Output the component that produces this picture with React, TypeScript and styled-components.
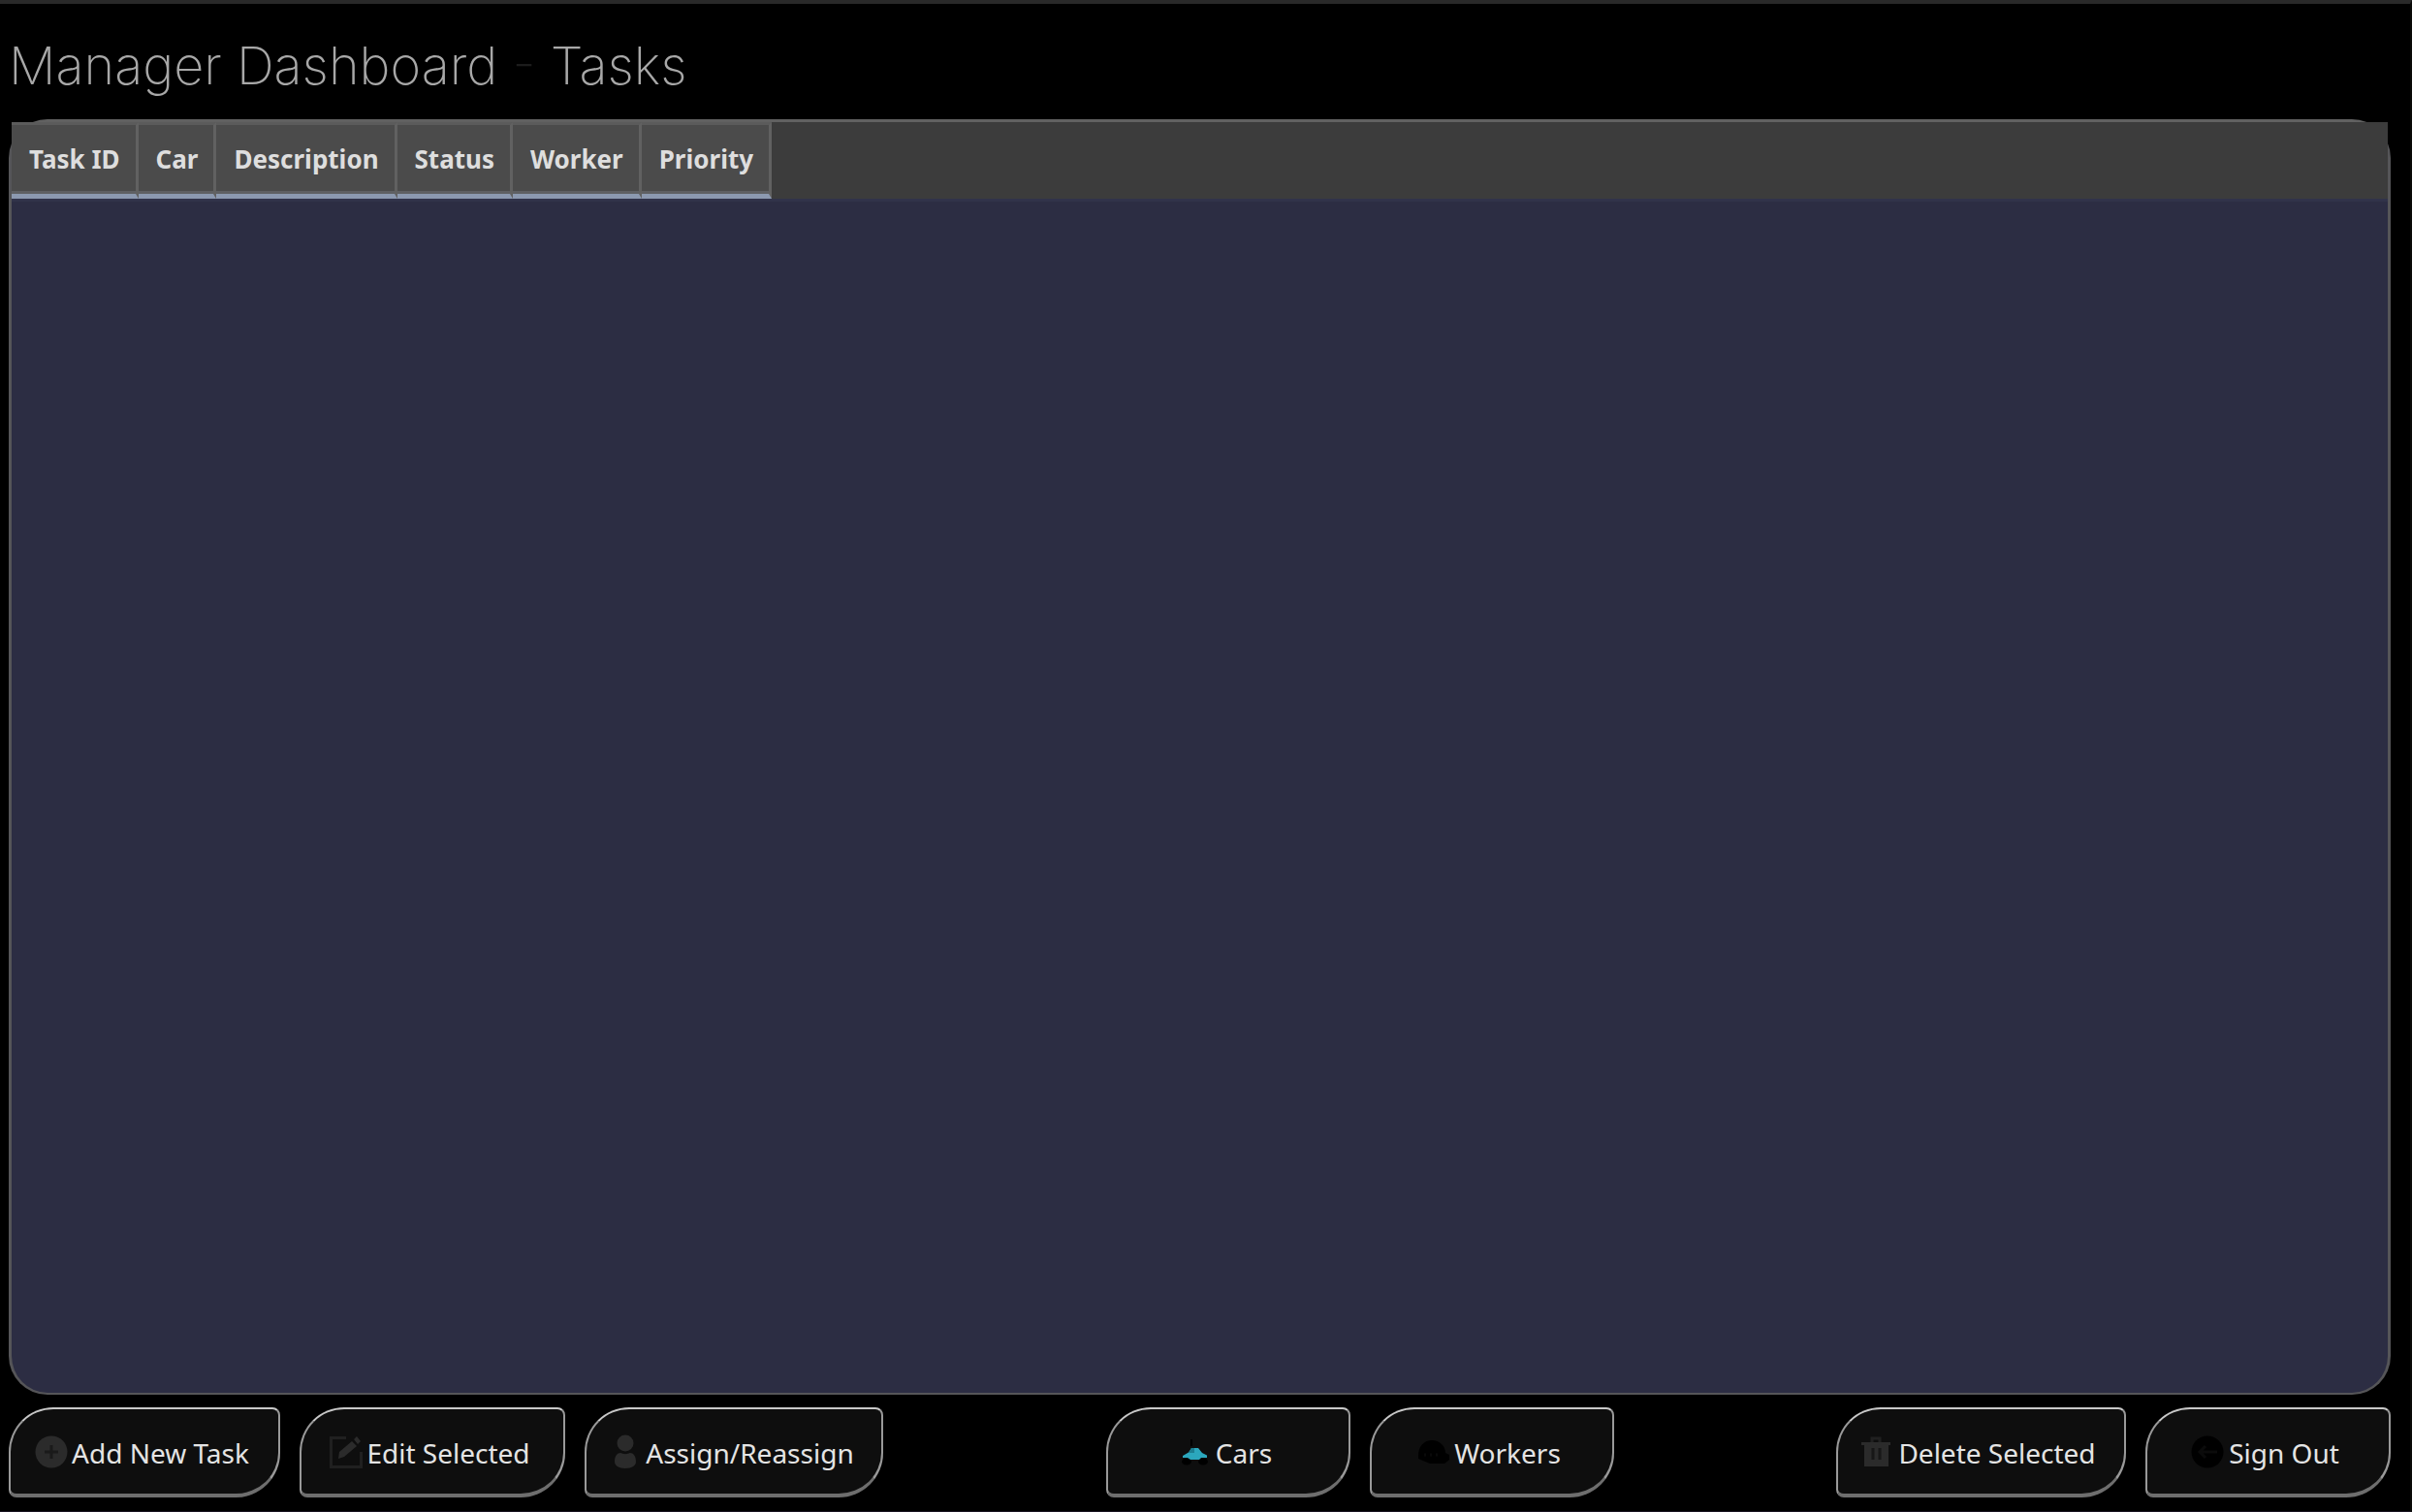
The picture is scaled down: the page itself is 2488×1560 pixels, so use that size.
import React from "react";
import styled, { createGlobalStyle } from "styled-components";

const GlobalStyle = createGlobalStyle`
  *, *::before, *::after { box-sizing: border-box; }
  body {
    margin: 0;
    background: #000;
    color: #e6e6e6;
    font-family: "Noto Sans", "Open Sans", sans-serif;
  }
`;

const Window = styled.div`
  min-height: 100vh;
  display: flex;
  flex-direction: column;
  background: #000;
  border-top: 4px solid #292929;
  border-bottom: 1px solid #1b1522;
  border-right: 2px solid #0a0a08;
`;

const Page = styled.main`
  flex: 1;
  display: flex;
  flex-direction: column;
  gap: 13px;
  padding: 23px 20px 14px 9px;
`;

const Title = styled.h1`
  margin: 0;
  height: 83px;
  font-family: Inter, sans-serif;
  font-size: 54px;
  font-weight: 200;
  line-height: 82px;
  color: #a8a8a8;
`;

const Dash = styled.span`
  color: #1c1c1c;
`;

const TablePanel = styled.section`
  flex: 1;
  background: #2c2d43;
  border: 3px solid #555558;
  border-top-color: #616161;
  border-bottom-width: 2px;
  border-radius: 40px;
`;

const HeaderStrip = styled.div`
  background: #3c3c3c;
  border-bottom: 3px solid #31334a;
`;

const TaskTable = styled.table`
  border-collapse: separate;
  border-spacing: 0;
`;

const HeaderCell = styled.th`
  height: 79px;
  padding: 0 16px 2px 18px;
  background: #4b4b4b;
  border-top: 3px solid #5b5b5b;
  border-right: 3px solid #616161;
  border-bottom: 5px solid #8c99b0;
  box-shadow: inset 0 -3px #5f6063;
  font-size: 26px;
  font-weight: 700;
  line-height: 32px;
  color: #dedede;
  white-space: nowrap;
`;

const Toolbar = styled.nav`
  display: flex;
  justify-content: space-between;
`;

const Group = styled.div`
  display: flex;
  gap: 20px;
`;

const ActionButton = styled.button<{ $width: number }>`
  display: flex;
  align-items: center;
  justify-content: center;
  gap: 3px;
  min-width: ${(p) => p.$width}px;
  height: 93px;
  padding: 0 24px 0 18px;
  background: #0e0e0e;
  border: 2px solid #999;
  border-top-color: #c8c8c8;
  border-bottom: 4px solid #6e6e6e;
  border-radius: 46px 8px 46px 8px;
  color: #e4e4e4;
  font-family: inherit;
  font-size: 28px;
  line-height: 36px;
  white-space: nowrap;
  cursor: pointer;
`;

const Label = styled.span`
  padding-top: 3px;
`;

const Glyph = styled.svg`
  flex: none;
  width: 36px;
  height: 36px;
`;

const AddIcon = () => (
  <Glyph viewBox="0 0 36 36" aria-hidden="true">
    <circle cx="18" cy="18" r="16.5" fill="#2b2b2b" />
    <path d="M18 11v14M11 18h14" stroke="#1a1a1a" strokeWidth="3" />
  </Glyph>
);

const EditIcon = () => (
  <Glyph viewBox="0 0 36 36" aria-hidden="true">
    <path d="M18 3.500H2.500v30h31V18" fill="none" stroke="#202020" strokeWidth="3" />
    <path d="M26 5 29 2l4 5-3 3zM24 7l5 5-13 11-6 2 1-7z" fill="#2b2b2b" />
  </Glyph>
);

const PersonIcon = () => (
  <Glyph viewBox="0 0 36 36" aria-hidden="true">
    <circle cx="18" cy="9" r="8.5" fill="#2b2b2b" />
    <path d="M7 28c0-6 3-9 6-9 3 1.500 7 1.500 10 0 3 0 6 3 6 9 0 4-4 7-11 7S7 32 7 28z" fill="#2b2b2b" />
  </Glyph>
);

const CarIcon = () => (
  <Glyph viewBox="0 0 36 36" aria-hidden="true">
    <path d="M14 5v7" stroke="#000" strokeWidth="2" />
    <ellipse cx="9" cy="28" rx="5" ry="3.500" fill="#000" />
    <ellipse cx="26" cy="28" rx="5" ry="3.500" fill="#000" />
    <path d="M5 22 11 18.500 14 14h7l4 5 5 2.500V24h-6l-2 2h-9l-3-2H5z" fill="#2ba7bd" />
    <path d="M14 14h3v5h-6z" fill="#1c7f92" />
  </Glyph>
);

const HelmetIcon = () => (
  <Glyph viewBox="0 0 36 36" aria-hidden="true">
    <path d="M2 22C2 12 8 6 16 6s14 6 14 13l4 2v5l-5 4H14L2 25z" fill="#000" />
    <path d="M8 21h2M14 21h2M20 21h2" stroke="#0a0a0a" strokeWidth="3" />
  </Glyph>
);

const TrashIcon = () => (
  <Glyph viewBox="0 0 36 36" aria-hidden="true">
    <path d="M12 8V4h8v4" fill="none" stroke="#202020" strokeWidth="3" />
    <path d="M1 8h30v3h-2v22H4V11H1z" fill="#2b2b2b" />
    <path d="M13 14v12M20 14v12" stroke="#171717" strokeWidth="3" />
  </Glyph>
);

const SignOutIcon = () => (
  <Glyph viewBox="0 0 36 36" aria-hidden="true">
    <circle cx="17" cy="18" r="16.5" fill="#000" />
    <path d="M27 18H10M15 12l-6 6 6 6" fill="none" stroke="#0b0b0b" strokeWidth="3" />
  </Glyph>
);

type Action = { label: string; width: number; Icon: React.ComponentType };

const columns = ["Task ID", "Car", "Description", "Status", "Worker", "Priority"];

const groups: Action[][] = [
  [
    { label: "Add New Task", width: 280, Icon: AddIcon },
    { label: "Edit Selected", width: 274, Icon: EditIcon },
    { label: "Assign/Reassign", width: 308, Icon: PersonIcon },
  ],
  [
    { label: "Cars", width: 252, Icon: CarIcon },
    { label: "Workers", width: 252, Icon: HelmetIcon },
  ],
  [
    { label: "Delete Selected", width: 299, Icon: TrashIcon },
    { label: "Sign Out", width: 253, Icon: SignOutIcon },
  ],
];

export default function App() {
  return (
    <Window>
      <GlobalStyle />
      <Page>
        <Title>
          Manager Dashboard <Dash>-</Dash> Tasks
        </Title>
        <TablePanel>
          <HeaderStrip>
            <TaskTable>
              <thead>
                <tr>
                  {columns.map((name) => (
                    <HeaderCell key={name} scope="col">{name}</HeaderCell>
                  ))}
                </tr>
              </thead>
            </TaskTable>
          </HeaderStrip>
        </TablePanel>
        <Toolbar>
          {groups.map((actions) => (
            <Group key={actions[0].label}>
              {actions.map(({ label, width, Icon }) => (
                <ActionButton key={label} type="button" $width={width}>
                  <Icon />
                  <Label>{label}</Label>
                </ActionButton>
              ))}
            </Group>
          ))}
        </Toolbar>
      </Page>
    </Window>
  );
}
